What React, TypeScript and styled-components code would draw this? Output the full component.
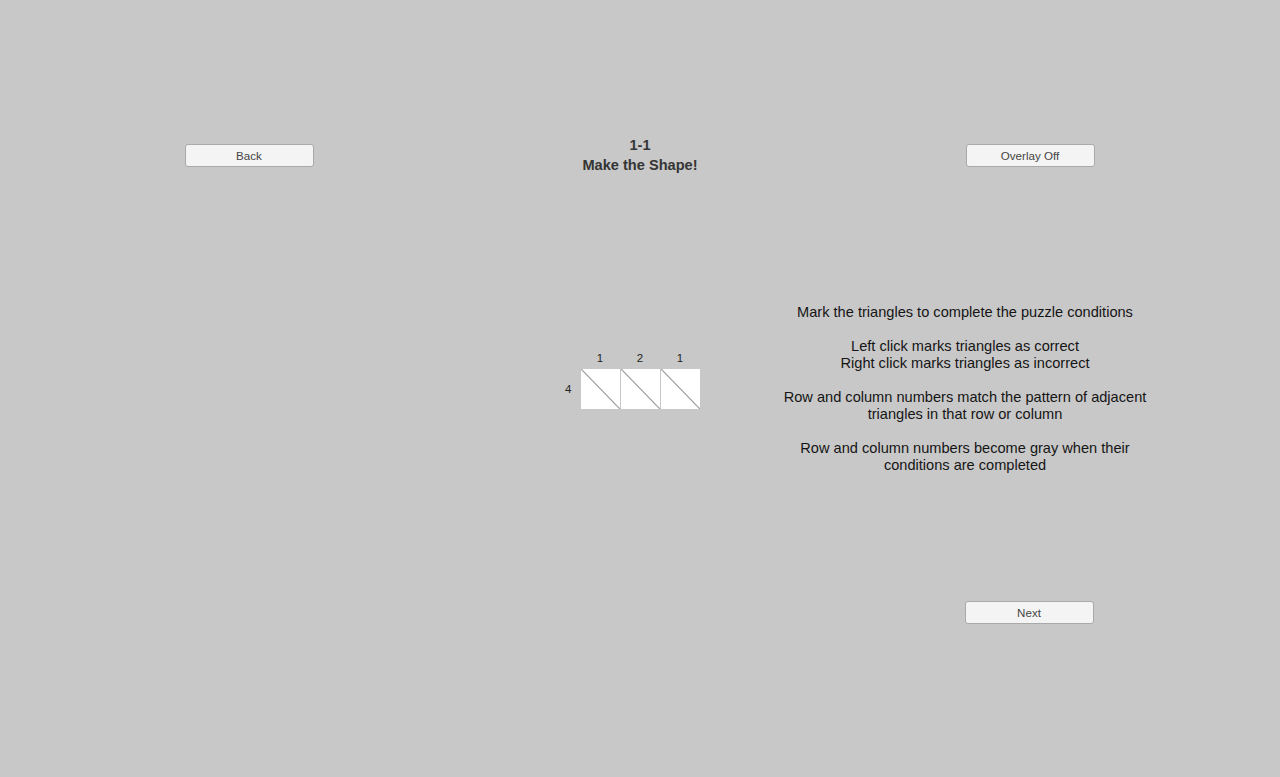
import styled, { createGlobalStyle } from 'styled-components';

const GlobalStyle = createGlobalStyle`
  html, body {
    margin: 0;
    padding: 0;
    background: #c8c8c8;
  }
  body {
    font-family: "Liberation Sans", Arial, sans-serif;
  }
`;

// Layout
const Screen = styled.div`
  width: 1280px;
  height: 777px;
  display: grid;
  grid-template-columns: 500px 280px 500px;
  background: #c8c8c8;
  overflow: hidden;
`;

const Column = styled.div<{ $top: number }>`
  display: flex;
  flex-direction: column;
  align-items: center;
  padding-top: ${(p) => p.$top}px;
`;

const Button = styled.button<{ $gap?: number; $nudge?: number }>`
  width: 129px;
  height: 23px;
  margin-top: ${(p) => p.$gap ?? 0}px;
  margin-right: ${(p) => p.$nudge ?? 0}px;
  padding: 0;
  border: 1px solid #a9a9a9;
  border-radius: 3px;
  background: #f4f4f4;
  color: #444;
  font-family: "Liberation Sans", Arial, sans-serif;
  font-size: 11.6px;
  cursor: pointer;
`;

const Title = styled.div`
  text-align: center;
  font-size: 14.6px;
  font-weight: bold;
  line-height: 20px;
  color: #353535;
`;

// Puzzle grid
const Puzzle = styled.div`
  margin-top: 177px;
  width: 100%;
  display: grid;
  grid-template-columns: 1fr auto 1fr;
  grid-template-rows: auto auto;
  row-gap: 4px;
`;

const ColNumbers = styled.div`
  grid-column: 2;
  grid-row: 1;
  display: grid;
  grid-template-columns: repeat(3, 39px);
  column-gap: 1px;
`;

const Clue = styled.span`
  text-align: center;
  font-size: 11.5px;
  line-height: 13px;
  color: #222;
`;

const RowNumber = styled(Clue)`
  grid-column: 1;
  grid-row: 2;
  justify-self: end;
  align-self: center;
  margin-right: 9px;
`;

const Cells = styled.div`
  grid-column: 2;
  grid-row: 2;
  display: flex;
  gap: 1px;
`;

const Cell = styled.div`
  width: 39px;
  height: 40px;
  background: #fff;
  svg {
    display: block;
  }
`;

const Instructions = styled.div`
  align-self: flex-start;
  width: 370px;
  margin-top: 137px;
  text-align: center;
  font-size: 14.6px;
  line-height: 17px;
  color: #151515;
`;

const Para = styled.p`
  margin: 0 0 17px;
  &:last-child {
    margin-bottom: 0;
  }
`;

const cols = [1, 2, 1];

const App = () => {
  return (
    <>
      <GlobalStyle />
      <Screen>
        <Column $top={144}>
          <Button $nudge={2}>Back</Button>
        </Column>

        <Column $top={135}>
          <Title>
            1-1
            <br />
            Make the Shape!
          </Title>
          <Puzzle>
            <ColNumbers>
              {cols.map((n, i) => (
                <Clue key={i}>{n}</Clue>
              ))}
            </ColNumbers>
            <RowNumber>4</RowNumber>
            <Cells>
              {cols.map((_, i) => (
                <Cell key={i}>
                  <svg width="39" height="40" viewBox="0 0 39 40">
                    <line x1="0" y1="0" x2="39" y2="40" stroke="#9a9a9a" strokeWidth="1.2" />
                  </svg>
                </Cell>
              ))}
            </Cells>
          </Puzzle>
        </Column>

        <Column $top={144}>
          <Button>Overlay Off</Button>
          <Instructions>
            <Para>Mark the triangles to complete the puzzle conditions</Para>
            <Para>
              Left click marks triangles as correct
              <br />
              Right click marks triangles as incorrect
            </Para>
            <Para>
              Row and column numbers match the pattern of adjacent
              <br />
              triangles in that row or column
            </Para>
            <Para>
              Row and column numbers become gray when their
              <br />
              conditions are completed
            </Para>
          </Instructions>
          <Button $gap={127} $nudge={2}>Next</Button>
        </Column>
      </Screen>
    </>
  );
};

export default App;
